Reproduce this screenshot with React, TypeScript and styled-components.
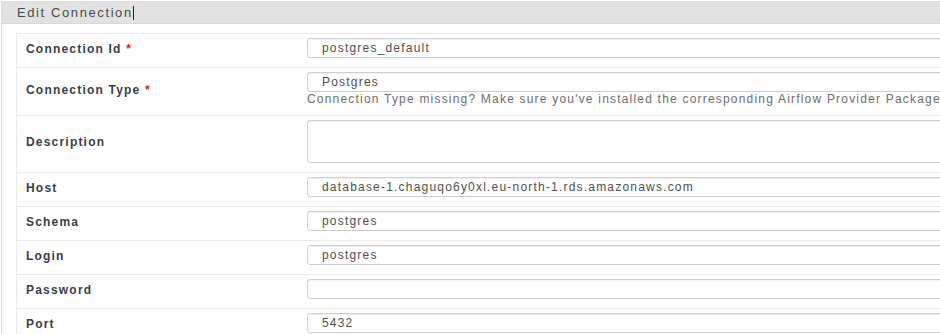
import React from 'react';
import styled, { createGlobalStyle } from 'styled-components';

const GlobalStyle = createGlobalStyle`
  html, body {
    margin: 0;
    padding: 0;
    background: #fff;
    overflow: hidden;
  }
  body {
    font-family: "Liberation Sans", Arial, sans-serif;
  }
`;

const Page = styled.div`
  width: 940px;
  height: 334px;
  overflow: hidden;
`;

const Panel = styled.section`
  width: 1200px;
  margin: 1px 0 0 1px;
  border: 1px solid #dedede;
`;

const Heading = styled.header`
  display: flex;
  align-items: center;
  height: 21px;
  padding-left: 15px;
  background: #e2e2e2;
  border-bottom: 1px solid #d8d8d8;
  color: #4a4a4a;
  font-size: 13px;
  letter-spacing: 1.6px;
`;

const Caret = styled.span`
  display: inline-block;
  width: 1px;
  height: 14px;
  background: #222;
`;

const PanelBody = styled.div`
  padding: 9px 0 0 14px;
`;

const FormTable = styled.table`
  border-collapse: collapse;
  border-left: 1px solid #ececec;
  border-top: 1px solid #ececec;
`;

const Row = styled.tr`
  border-bottom: 1px solid #ececec;
`;

const LabelCell = styled.td`
  width: 261px;
  padding: 0 10px 4px 9px;
  vertical-align: middle;
  color: #38404b;
  font-size: 12px;
  font-weight: bold;
  letter-spacing: 1.2px;
  white-space: nowrap;
`;

const Required = styled.span`
  color: #e02020;
`;

const FieldCell = styled.td`
  padding: 4px 0 9px 10px;
  vertical-align: top;
`;

const fieldBox = `
  display: block;
  box-sizing: border-box;
  width: 820px;
  border: 1px solid #cfcfcf;
  border-radius: 3px;
  box-shadow: inset 0 1px 1px rgba(0, 0, 0, 0.06);
  background: #fff;
  color: #505050;
  font-family: "Liberation Sans", Arial, sans-serif;
  font-size: 12px;
  letter-spacing: 1.2px;
  outline: none;
`;

const Input = styled.input`
  ${fieldBox}
  height: 20px;
  padding: 0 14px;
`;

const TextArea = styled.textarea`
  ${fieldBox}
  height: 43px;
  padding: 4px 14px;
  resize: none;
`;

const Help = styled.div`
  height: 14px;
  line-height: 14px;
  color: #6e6e6e;
  font-size: 12px;
  letter-spacing: 1.2px;
  white-space: nowrap;
`;

type Field = {
  label: string;
  value?: string;
  required?: boolean;
  multiline?: boolean;
  help?: string;
  type?: string;
};

const fields: Field[] = [
  { label: 'Connection Id', value: 'postgres_default', required: true },
  {
    label: 'Connection Type',
    value: 'Postgres',
    required: true,
    help: "Connection Type missing? Make sure you've installed the corresponding Airflow Provider Package.",
  },
  { label: 'Description', multiline: true },
  { label: 'Host', value: 'database-1.chaguqo6y0xl.eu-north-1.rds.amazonaws.com' },
  { label: 'Schema', value: 'postgres' },
  { label: 'Login', value: 'postgres' },
  { label: 'Password', type: 'password' },
  { label: 'Port', value: '5432' },
];

const App: React.FC = () => {
  return (
    <Page>
      <GlobalStyle />
      <Panel>
        <Heading>
          Edit Connection
          <Caret />
        </Heading>
        <PanelBody>
          <FormTable>
            <tbody>
              {fields.map((f) => (
                <Row key={f.label}>
                  <LabelCell>
                    {f.label}
                    {f.required && <Required> *</Required>}
                  </LabelCell>
                  <FieldCell>
                    {f.multiline ? (
                      <TextArea defaultValue={f.value ?? ''} />
                    ) : (
                      <Input type={f.type ?? 'text'} defaultValue={f.value ?? ''} />
                    )}
                    {f.help && <Help>{f.help}</Help>}
                  </FieldCell>
                </Row>
              ))}
            </tbody>
          </FormTable>
        </PanelBody>
      </Panel>
    </Page>
  );
};

export default App;
